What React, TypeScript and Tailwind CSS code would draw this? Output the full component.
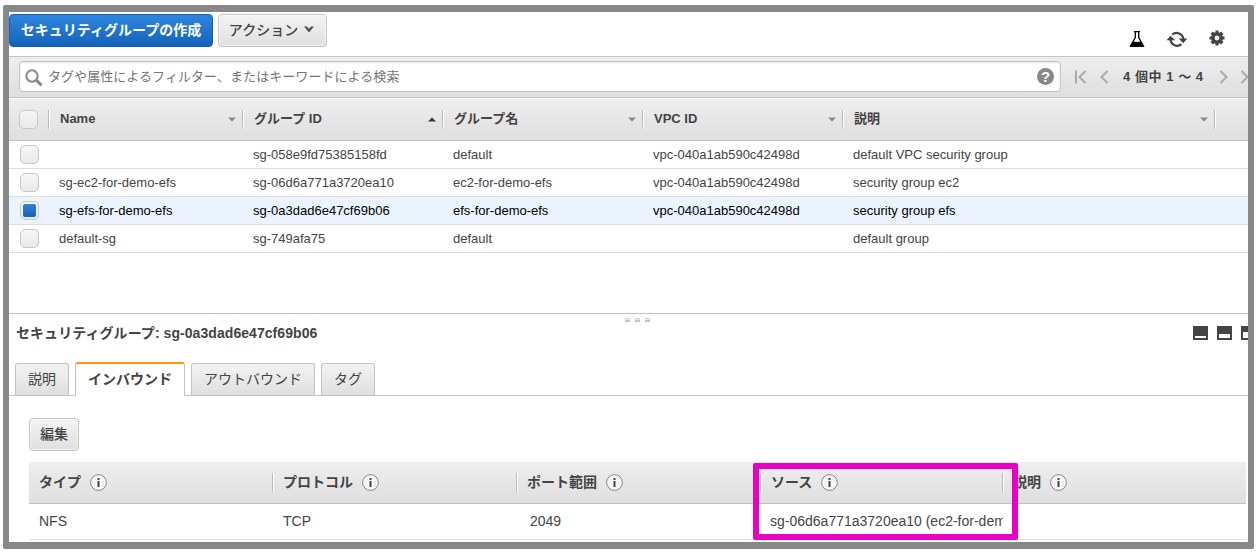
import type { ReactNode } from 'react'
import clsx from 'clsx'

interface SecurityGroup {
  name: string
  groupId: string
  groupName: string
  vpcId: string
  description: string
  selected?: boolean
}

const GROUPS: SecurityGroup[] = [
  { name: '', groupId: 'sg-058e9fd75385158fd', groupName: 'default', vpcId: 'vpc-040a1ab590c42498d', description: 'default VPC security group' },
  { name: 'sg-ec2-for-demo-efs', groupId: 'sg-06d6a771a3720ea10', groupName: 'ec2-for-demo-efs', vpcId: 'vpc-040a1ab590c42498d', description: 'security group ec2' },
  { name: 'sg-efs-for-demo-efs', groupId: 'sg-0a3dad6e47cf69b06', groupName: 'efs-for-demo-efs', vpcId: 'vpc-040a1ab590c42498d', description: 'security group efs', selected: true },
  { name: 'default-sg', groupId: 'sg-749afa75', groupName: 'default', vpcId: '', description: 'default group' },
]

const COLUMNS = [
  { label: 'Name', sort: 'down' },
  { label: 'グループ ID', sort: 'up' },
  { label: 'グループ名', sort: 'down' },
  { label: 'VPC ID', sort: 'down' },
  { label: '説明', sort: 'down' },
]

const TABS = [
  { label: '説明', width: 'w-[54px]' },
  { label: 'インバウンド', width: 'w-[110px]', active: true },
  { label: 'アウトバウンド', width: 'w-[124px]' },
  { label: 'タグ', width: 'w-[54px]' },
]

const GRID = 'grid grid-cols-[39px_194px_200px_200px_200px_372px_1fr]'
const RULE_GRID = 'grid grid-cols-[244px_244px_244px_242px_1fr]'

// ---------------------------------------------------------------------------
// Icons
// ---------------------------------------------------------------------------

function FlaskIcon() {
  return (
    <svg width="16" height="17" viewBox="0 0 16 17">
      <path d="M5 .7h6M6.300 1v5.500L1.500 15.200h13L9.700 6.500V1" fill="none" stroke="#000" strokeWidth="1.300" />
      <path d="M4 10.800h8l3 4.900H1z" fill="#000" />
    </svg>
  )
}

function RefreshIcon() {
  return (
    <svg width="22" height="17" viewBox="0 0 22 17">
      <path d="M6.200 3.600A6.700 6.700 0 0 1 17.300 8M15.400 13.200A6.700 6.700 0 0 1 4.500 8.700" fill="none" stroke="#444" strokeWidth="2.200" />
      <path d="M12.600 7.600h8.700L17.200 12.200zM.5 9.300h8.600L4.500 4.700z" fill="#444" />
    </svg>
  )
}

function GearIcon() {
  return (
    <svg width="16" height="16" viewBox="0 0 16 16" fill="#444">
      <path
        fillRule="evenodd"
        d="M6.500.5h3v1.800l1.200.5L12 1.500 14.500 4l-1.300 1.300.5 1.200h1.800v3h-1.800l-.5 1.200 1.300 1.300-2.500 2.500-1.300-1.300-1.200.5v1.800h-3v-1.800l-1.200-.5L4 14.500 1.500 12l1.300-1.300-.5-1.200H.5v-3h1.800l.5-1.200L1.500 4 4 1.500l1.300 1.300 1.200-.5zM8 5.600a2.400 2.400 0 1 0 0 4.800 2.400 2.400 0 0 0 0-4.800z"
      />
    </svg>
  )
}

function SearchIcon() {
  return (
    <svg width="18" height="18" viewBox="0 0 18 18" fill="none" stroke="#888">
      <circle cx="7" cy="7" r="5.700" strokeWidth="2" />
      <path d="M11.200 11.200l5.400 5.200" strokeWidth="3" />
    </svg>
  )
}

function Chevron({ dir, bar }: { dir: 'left' | 'right'; bar?: boolean }) {
  return (
    <svg width="12" height="14" viewBox="0 0 12 14" fill="none" stroke="#aaa" strokeWidth="2" className="shrink-0">
      {bar && <path d="M1 .5v13" />}
      <path d={dir === 'left' ? 'M10.500 1L4.500 7l6 6' : 'M1.500 1l6 6-6 6'} />
    </svg>
  )
}

function InfoIcon() {
  return (
    <svg width="17" height="17" viewBox="0 0 17 17">
      <circle cx="8.500" cy="8.500" r="7.900" fill="#f4f4f4" stroke="#888" strokeWidth="1" />
      <path d="M7.500 4h2v2h-2zM7.500 7h2v6h-2z" fill="#444" />
    </svg>
  )
}

function PaneIcon({ cut }: { cut: string }) {
  return (
    <svg width="15" height="14" viewBox="0 0 15 14" className="shrink-0">
      <path d="M0 0h15v14H0z" fill="#444" />
      <path d={cut} fill="#fff" />
    </svg>
  )
}

function SortArrow({ dir }: { dir: string }) {
  return (
    <svg width="8" height="5" viewBox="0 0 8 5" className="shrink-0">
      <path d={dir === 'up' ? 'M0 4.500h8L4 .5z' : 'M0 .5h8L4 4.500z'} fill={dir === 'up' ? '#333' : '#888'} />
    </svg>
  )
}

// ---------------------------------------------------------------------------
// Controls
// ---------------------------------------------------------------------------

function Button({ children, className }: { children: ReactNode; className?: string }) {
  return (
    <button
      type="button"
      className={clsx(
        'flex h-[33px] items-center justify-center rounded border border-[#c4c4c4] bg-linear-to-b from-[#f3f3f3] to-[#e0e0e0] pb-px text-sm font-medium whitespace-nowrap text-[#444] shadow-[inset_0_0_0_1px_rgba(255,255,255,0.5)]',
        className,
      )}
    >
      {children}
    </button>
  )
}

function Checkbox({ checked }: { checked?: boolean }) {
  return (
    <span className="flex size-[19px] items-center justify-center rounded-[5px] border border-[#c8c8c8] bg-linear-to-b from-[#f6f6f6] to-[#e9e9e9]">
      {checked && <span className="size-[13px] rounded-[2px] bg-linear-to-b from-[#2f83d9] to-[#1462b8]" />}
    </span>
  )
}

function Divider() {
  return <span className="h-[19px] w-[2px] shrink-0 border-l border-[#bbb] bg-white" />
}

function RuleHeader({ label, divider = true }: { label: string; divider?: boolean }) {
  return (
    <div className="flex h-[19px] items-center justify-between">
      <div className="flex items-center gap-[9px] pl-2.5">
        <span className="-mt-0.5">{label}</span>
        <InfoIcon />
      </div>
      {divider && (
        <span className="-mr-px flex">
          <Divider />
        </span>
      )}
    </div>
  )
}

// ---------------------------------------------------------------------------
// Panels
// ---------------------------------------------------------------------------

function ActionBar() {
  return (
    <div className="flex h-11 shrink-0 items-start gap-[5px] pt-0.5">
      <button
        type="button"
        className="h-[33px] w-[204px] rounded border border-[#1560b3] bg-linear-to-b from-[#2f86df] to-[#1463b9] pb-px text-sm font-bold whitespace-nowrap text-white"
      >
        セキュリティグループの作成
      </button>
      <Button className="w-[109px] gap-1.5 pr-0.5">
        <span>アクション</span>
        <svg width="10" height="7" viewBox="0 0 10 7" className="-mt-0.5">
          <path d="M0 .5h3L5 2.800 7 .5h3L5 6.500z" fill="#555" />
        </svg>
      </Button>
      <div className="mr-[23px] ml-auto flex gap-[21px] pt-4">
        <div className="flex pt-px">
          <FlaskIcon />
        </div>
        <div className="flex pt-px">
          <RefreshIcon />
        </div>
        <GearIcon />
      </div>
    </div>
  )
}

function FilterBar() {
  return (
    <div className="flex h-[42px] shrink-0 items-center border-t border-b border-[#c4c4c4] bg-linear-to-b from-[#eee] to-[#dfdfdf] pl-2.5">
      <div className="-mt-px flex h-[31px] w-[1042px] shrink-0 items-center rounded border border-[#c4c4c4] bg-white pr-1.5 pl-[5px] shadow-[inset_0_1px_2px_rgba(0,0,0,0.1)]">
        <div className="flex pt-0.5">
          <SearchIcon />
        </div>
        <span className="ml-[5px] text-[13px] tracking-[0.06px] text-[#757575]">タグや属性によるフィルター、またはキーワードによる検索</span>
        <span className="ml-auto flex size-[17px] items-center justify-center rounded-full bg-[#888] text-[15px] leading-none font-bold text-white">?</span>
      </div>
      <div className="-mt-px flex items-center pl-3.5">
        <Chevron dir="left" bar />
        <span className="ml-2.5 flex">
          <Chevron dir="left" />
        </span>
        <span className="ml-[14px] w-[82px] text-[13px] font-bold tracking-[0.55px] whitespace-nowrap text-[#444]">4 個中 1 ～ 4</span>
        <span className="ml-3.5 flex">
          <Chevron dir="right" />
        </span>
        <span className="ml-[9px] flex">
          <Chevron dir="right" />
        </span>
      </div>
    </div>
  )
}

function GroupTable() {
  return (
    <div className="text-[13px] whitespace-nowrap text-[#444]">
      <div className={clsx(GRID, 'h-[43px] border-t border-b border-t-white border-b-[#c4c4c4] bg-linear-to-b from-[#eee] to-[#dfdfdf] pt-[11px] font-bold')}>
        <div className="pl-2.5">
          <Checkbox />
        </div>
        {COLUMNS.map(col => (
          <div key={col.label} className="flex h-[19px] items-center">
            <Divider />
            <span className="-mt-0.5 pl-2.5">{col.label}</span>
            <span className="mr-1.5 ml-auto flex">
              <SortArrow dir={col.sort} />
            </span>
          </div>
        ))}
        <div className="flex h-[19px]">
          <Divider />
        </div>
      </div>
      {GROUPS.map(group => (
        <div
          key={group.groupId}
          className={clsx(GRID, 'h-7 items-center border-b border-[#ddd]', group.selected && 'bg-[#eaf3fe] text-black')}
        >
          <div className="pl-[11px]">
            <Checkbox checked={group.selected} />
          </div>
          <div className="pl-[11px]">{group.name}</div>
          <div className="pl-[11px]">{group.groupId}</div>
          <div className="pl-[11px]">{group.groupName}</div>
          <div className="pl-[11px]">{group.vpcId}</div>
          <div className="pl-[11px]">{group.description}</div>
        </div>
      ))}
    </div>
  )
}

function DetailPane() {
  return (
    <div className="mt-[60px] border-t border-[#c4c4c4] text-sm text-[#444]">
      {/* Splitter handle */}
      <div className="flex h-2 items-end justify-center gap-[5px] pl-[18px]">
        {[0, 1, 2].map(i => (
          <span key={i} className="h-1 w-[5px] rounded-t-[2px] border border-b-2 border-[#c4c4c4]" />
        ))}
      </div>
      <div className="flex h-[22px] items-center pl-[7px]">
        <h2 className="font-bold tracking-[0.06px] whitespace-nowrap">セキュリティグループ: sg-0a3dad6e47cf69b06</h2>
        <div className="-mr-2 ml-auto flex gap-[9px]">
          <PaneIcon cut="M2 10h11v2H2z" />
          <PaneIcon cut="M2 8h11v4H2z" />
          <PaneIcon cut="M2 6h11v6H2z" />
        </div>
      </div>
      <div className="mt-[18px] flex h-[34px] items-end gap-1.5 border-b border-[#c4c4c4] pl-1.5">
        {TABS.map(tab => (
          <div
            key={tab.label}
            className={clsx(
              'flex items-center justify-center rounded-t-[3px] border border-b-0 border-[#c4c4c4]',
              tab.width,
              tab.active
                ? '-mb-px h-[34px] border-t-2 border-t-[#f90] bg-white pb-[3px] font-bold'
                : 'h-8 bg-linear-to-b from-[#f3f3f3] to-[#dfdfdf] pb-0.5',
            )}
          >
            {tab.label}
          </div>
        ))}
      </div>
      <div className="pt-[22px] pl-5">
        <Button className="w-[50px]">編集</Button>
        <div className="mt-[11px] mr-0.5 whitespace-nowrap">
          <div className={clsx(RULE_GRID, 'h-[42px] border-b border-[#c4c4c4] bg-linear-to-b from-[#eee] to-[#dfdfdf] pt-[11px] font-bold')}>
            <RuleHeader label="タイプ" />
            <RuleHeader label="プロトコル" />
            <RuleHeader label="ポート範囲" />
            <RuleHeader label="ソース" />
            <RuleHeader label="説明" divider={false} />
          </div>
          <div className={clsx(RULE_GRID, 'h-9 items-center border-b border-[#ddd] pb-0.5')}>
            <div className="pl-2.5">NFS</div>
            <div className="pl-2.5">TCP</div>
            <div className="pl-[13px]">2049</div>
            <div className="ml-[9px] overflow-hidden">sg-06d6a771a3720ea10 (ec2-for-dem</div>
            <div />
          </div>
        </div>
      </div>
    </div>
  )
}

export default function App() {
  return (
    <div className="relative h-[552px] w-[1259px] overflow-hidden bg-white pt-[5px] pl-[3px] font-['Liberation_Sans','Noto_Sans_CJK_JP',sans-serif]">
      <div className="flex h-[544px] w-[1251px] flex-col overflow-hidden rounded-[2px] border-x-[6px] border-y-[7px] border-[#888]">
        <ActionBar />
        <FilterBar />
        <GroupTable />
        <DetailPane />
      </div>
      {/* Highlight over the source column */}
      <div className="absolute top-[463px] left-[753px] h-[77px] w-[265px] rounded-[2px] border-6 border-[#e800c4]" />
    </div>
  )
}
